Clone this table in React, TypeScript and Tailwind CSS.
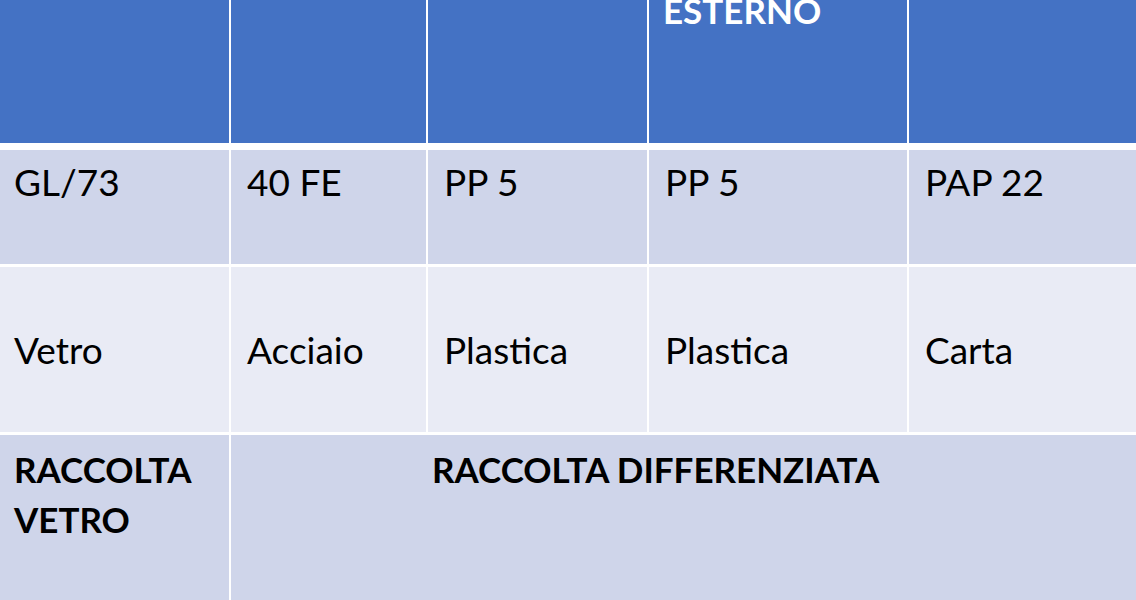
const font = { fontFamily: 'Lato, "Open Sans", sans-serif' };

function Cell({ children, className = '' }: { children?: React.ReactNode; className?: string }) {
  return <div className={`pl-[16px] pr-2 ${className}`}>{children}</div>;
}

export default function App() {
  return (
    <div
      className="w-[1136px] h-[600px] overflow-hidden bg-white text-black text-[37px] leading-[50px]"
      style={font}
    >
      <div className="grid grid-cols-[229px_195px_219px_258px_1fr] grid-rows-[147px_114px_165px_165px] gap-x-[2px] gap-y-[3px] h-[600px]">
        {/* Header */}
        <Cell className="bg-[#4472c4] border-b-[4px] border-white" />
        <Cell className="bg-[#4472c4] border-b-[4px] border-white" />
        <Cell className="bg-[#4472c4] border-b-[4px] border-white" />
        <Cell className="bg-[#4472c4] border-b-[4px] border-white overflow-hidden !pl-[14px]">
          <div className="-mt-[15px] font-bold text-white text-[35px]">ESTERNO</div>
        </Cell>
        <Cell className="bg-[#4472c4] border-b-[4px] border-white" />

        {/* Codes */}
        <Cell className="bg-[#cfd5ea] pt-[7px] !pl-[14px]">GL/73</Cell>
        <Cell className="bg-[#cfd5ea] pt-[7px]">40 FE</Cell>
        <Cell className="bg-[#cfd5ea] pt-[7px]">PP 5</Cell>
        <Cell className="bg-[#cfd5ea] pt-[7px]">PP 5</Cell>
        <Cell className="bg-[#cfd5ea] pt-[7px]">PAP 22</Cell>

        {/* Materials */}
        <Cell className="bg-[#e9ebf5] flex items-center !pl-[14px]">Vetro</Cell>
        <Cell className="bg-[#e9ebf5] flex items-center">Acciaio</Cell>
        <Cell className="bg-[#e9ebf5] flex items-center">Plastica</Cell>
        <Cell className="bg-[#e9ebf5] flex items-center">Plastica</Cell>
        <Cell className="bg-[#e9ebf5] flex items-center">Carta</Cell>

        {/* Collection */}
        <Cell className="bg-[#cfd5ea] pt-[9px] !pl-[14px] font-bold text-[35px]">
          RACCOLTA
          <br />
          VETRO
        </Cell>
        <div className="col-span-4 bg-[#cfd5ea] pt-[9px] pl-[201px] font-bold text-[35px]">
          RACCOLTA DIFFERENZIATA
        </div>
      </div>
    </div>
  );
}
